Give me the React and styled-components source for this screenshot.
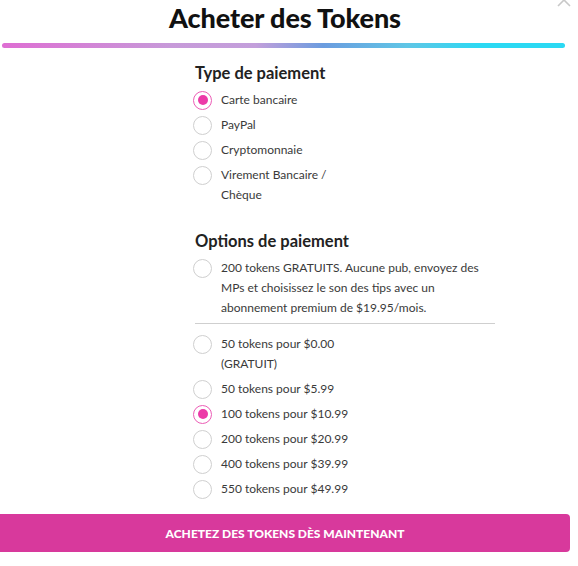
import React, { useState } from "react";
import styled, { createGlobalStyle } from "styled-components";

const GlobalStyle = createGlobalStyle`
  html, body {
    margin: 0;
    padding: 0;
    background: #fff;
    font-family: Lato, "Open Sans", sans-serif;
    overflow: hidden;
  }
`;

const paymentTypes = [
  "Carte bancaire",
  "PayPal",
  "Cryptomonnaie",
  "Virement Bancaire / Chèque",
];

const tokenOptions = [
  "50 tokens pour $0.00 (GRATUIT)",
  "50 tokens pour $5.99",
  "100 tokens pour $10.99",
  "200 tokens pour $20.99",
  "400 tokens pour $39.99",
  "550 tokens pour $49.99",
];

const RadioRow = ({ label, checked, onSelect, wide }) => {
  return (
    <Row onClick={onSelect}>
      <RadioCircle $checked={checked} />
      <Label $wide={wide}>{label}</Label>
    </Row>
  );
};

export default function App() {
  const [type, setType] = useState(0);
  const [option, setOption] = useState(3);

  return (
    <Modal>
      <GlobalStyle />
      <Close aria-label="close">
        <svg width="14" height="14" viewBox="0 0 14 14">
          <path d="M1 1L13 13M13 1L1 13" stroke="#c8c8c8" strokeWidth="1.6" />
        </svg>
      </Close>
      <Title>Acheter des Tokens</Title>
      <GradientBar />
      <Form>
        <Section>
          <Heading>Type de paiement</Heading>
          <List>
            {paymentTypes.map((t, i) => (
              <RadioRow
                key={t}
                label={t}
                checked={type === i}
                onSelect={() => setType(i)}
              />
            ))}
          </List>
        </Section>
        <Section>
          <Heading>Options de paiement</Heading>
          <List>
            <RadioRow
              wide
              label="200 tokens GRATUITS. Aucune pub, envoyez des MPs et choisissez le son des tips avec un abonnement premium de $19.95/mois."
              checked={option === -1}
              onSelect={() => setOption(-1)}
            />
            <Divider />
            {tokenOptions.map((t, i) => (
              <RadioRow
                key={t}
                label={t}
                checked={option === i + 1}
                onSelect={() => setOption(i + 1)}
              />
            ))}
          </List>
        </Section>
      </Form>
      <BuyButton>Achetez des tokens dès maintenant</BuyButton>
    </Modal>
  );
}

const Modal = styled.div`
  position: relative;
  width: 570px;
  padding-bottom: 14px;
`;

const Close = styled.button`
  position: absolute;
  top: -7px;
  right: -1px;
  border: 0;
  background: none;
  padding: 0;
  cursor: pointer;
`;

const Title = styled.h1`
  margin: 0;
  padding-top: 3px;
  text-align: center;
  font-size: 27px;
  line-height: 30px;
  font-weight: 900;
  color: #111;
  letter-spacing: -0.1px;
`;

const GradientBar = styled.div`
  margin: 10px 5px 0 2px;
  height: 5px;
  border-radius: 3px;
  background: linear-gradient(
    90deg,
    #de6ed3 0%,
    #c79ad9 30%,
    #c39fdb 45%,
    #6b9cdf 57%,
    #5fc6e6 72%,
    #2bd9f3 85%,
    #2bd9f3 100%
  );
`;

const Form = styled.div`
  margin: 15px 0 0 193px;
  width: 302px;
  display: flex;
  flex-direction: column;
  gap: 26px;
`;

const Section = styled.div`
  display: flex;
  flex-direction: column;
  gap: 7px;
`;

const Heading = styled.h2`
  margin: 0 0 0 2px;
  font-size: 16.5px;
  line-height: 20px;
  font-weight: 700;
  color: #222;
`;

const List = styled.div`
  display: flex;
  flex-direction: column;
  gap: 5px;
`;

const Row = styled.label`
  display: flex;
  align-items: flex-start;
  gap: 9px;
  cursor: pointer;
`;

const RadioCircle = styled.span`
  flex: none;
  box-sizing: border-box;
  width: 19px;
  height: 19px;
  margin-top: 0.5px;
  border-radius: 50%;
  border: ${(p) => (p.$checked ? "1.5px solid #ec5db6" : "1px solid #cfcfcf")};
  display: flex;
  align-items: center;
  justify-content: center;

  &::after {
    content: "";
    display: ${(p) => (p.$checked ? "block" : "none")};
    width: 10px;
    height: 10px;
    border-radius: 50%;
    background: #ec3aa8;
  }
`;

const Label = styled.span`
  font-size: 12px;
  line-height: 20px;
  color: #3a3a3a;
  max-width: ${(p) => (p.$wide ? "276px" : "128px")};
`;

const Divider = styled.hr`
  margin: 0 0 5px 2px;
  border: 0;
  height: 1px;
  background: #cfcfcf;
`;

const BuyButton = styled.button`
  display: block;
  margin-top: 15px;
  width: 570px;
  height: 38px;
  border: 0;
  border-radius: 0 4px 4px 0;
  background: #d8399c;
  color: #fff;
  font-family: Lato, sans-serif;
  font-size: 12px;
  font-weight: 900;
  text-transform: uppercase;
  letter-spacing: 0;
  cursor: pointer;
`;
